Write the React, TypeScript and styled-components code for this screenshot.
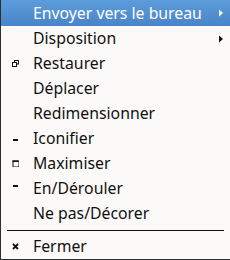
import React from "react";
import styled, { createGlobalStyle } from "styled-components";

const Global = createGlobalStyle`
  html, body {
    margin: 0;
    padding: 0;
    background: #fbfaf8;
  }
`;

type Item = {
  label: string;
  icon?: "restore" | "iconify" | "max" | "shade" | "close";
  sub?: boolean;
  active?: boolean;
};

const items: Item[] = [
  { label: "Envoyer vers le bureau", sub: true, active: true },
  { label: "Disposition", sub: true },
  { label: "Restaurer", icon: "restore" },
  { label: "Déplacer" },
  { label: "Redimensionner" },
  { label: "Iconifier", icon: "iconify" },
  { label: "Maximiser", icon: "max" },
  { label: "En/Dérouler", icon: "shade" },
  { label: "Ne pas/Décorer" },
];

const Glyph = ({ kind }: { kind: Item["icon"] }) => {
  switch (kind) {
    case "restore":
      return (
        <svg width="7" height="7" viewBox="0 0 7 7">
          <rect x="2.5" y="0.5" width="4" height="3.5" fill="none" stroke="#111" />
          <rect x="0.5" y="2.5" width="4" height="4" fill="#fbfaf8" stroke="#111" />
        </svg>
      );
    case "iconify":
      return (
        <svg width="7" height="7" viewBox="0 0 7 7">
          <rect x="1" y="4" width="5" height="2" fill="#111" />
        </svg>
      );
    case "max":
      return (
        <svg width="7" height="7" viewBox="0 0 7 7">
          <rect x="1" y="1" width="6" height="6" fill="none" stroke="#111" strokeWidth="1" />
          <rect x="0.5" y="0.5" width="6" height="1.5" fill="#111" />
        </svg>
      );
    case "shade":
      return (
        <svg width="7" height="7" viewBox="0 0 7 7">
          <rect x="1" y="0" width="5" height="2" fill="#111" />
        </svg>
      );
    case "close":
      return (
        <svg width="7" height="7" viewBox="0 0 7 7">
          <path d="M1 1 L6 6 M6 1 L1 6" stroke="#111" strokeWidth="1.8" />
        </svg>
      );
    default:
      return null;
  }
};

const Arrow = ({ light }: { light?: boolean }) => (
  <svg width="5" height="8" viewBox="0 0 5 8">
    <path d="M0 0.5 L4 4 L0 7.5 Z" fill={light ? "#ffffff" : "#111111"} />
  </svg>
);

export default function App() {
  return (
    <>
      <Global />
      <Menu>
        {items.map((it) => (
          <Row key={it.label} $active={it.active}>
            <IconCell>{it.icon && <Glyph kind={it.icon} />}</IconCell>
            <Label>{it.label}</Label>
            <ArrowCell>{it.sub && <Arrow light={it.active} />}</ArrowCell>
          </Row>
        ))}
        <Separator />
        <Row>
          <IconCell>
            <Glyph kind="close" />
          </IconCell>
          <Label>Fermer</Label>
          <ArrowCell />
        </Row>
      </Menu>
    </>
  );
}

const Menu = styled.div`
  width: 229px;
  height: 259px;
  border-left: 1px solid #2e2e2e;
  border-bottom: 1px solid #2e2e2e;
  background: #fbfaf8;
  display: flex;
  flex-direction: column;
  font-family: "Noto Sans", "Open Sans", sans-serif;
  font-size: 15.8px;
`;

const Row = styled.div<{ $active?: boolean }>`
  height: ${(p) => (p.$active ? "26px" : "25px")};
  flex-shrink: 0;
  display: flex;
  align-items: center;
  color: ${(p) => (p.$active ? "#ffffff" : "#111111")};
  background: ${(p) =>
    p.$active ? "linear-gradient(#5d9cdb, #4885c9)" : "transparent"};
`;

const IconCell = styled.div`
  width: 32px;
  padding-left: 11px;
  box-sizing: border-box;
  display: flex;
  align-items: center;
`;

const Label = styled.span`
  flex: 1;
  white-space: nowrap;
  line-height: 25px;
`;

const ArrowCell = styled.div`
  width: 11px;
  display: flex;
  align-items: center;
`;

const Separator = styled.div`
  height: 1px;
  flex-shrink: 0;
  background: #111;
  margin: 4px 6px 3px 6px;
`;
